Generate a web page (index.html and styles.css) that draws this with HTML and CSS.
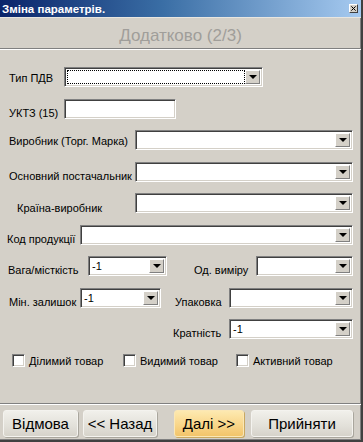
FILE: index.html
```html
<!DOCTYPE html>
<html lang="uk">
<head>
    <meta charset="UTF-8">
    <meta name="viewport" content="width=device-width, initial-scale=1.0">
    <title>Зміна параметрів</title>
    <link rel="stylesheet" href="styles.css">
</head>
<body>
    <div class="window">
        <div class="titlebar">
            <span class="title">Зміна параметрів.</span>
            <span class="close-btn">
                <svg width="7" height="7" viewBox="0 0 7 7"><path d="M0.5 0.5 L6.5 6.5 M6.5 0.5 L0.5 6.5" stroke="#000" stroke-width="1.4"/></svg>
            </span>
        </div>

        <div class="header">Додатково (2/3)</div>

        <div class="panel">
            <div class="form">
                <div class="row r-pdv">
                    <label class="lbl lift">Тип ПДВ</label>
                    <div class="combo">
                        <div class="combo-text focus"></div>
                        <div class="combo-btn"><span class="arrow"></span></div>
                    </div>
                </div>

                <div class="row r-uktz">
                    <label class="lbl">УКТЗ (15)</label>
                    <div class="edit"></div>
                </div>

                <div class="row r-wide">
                    <label class="lbl lift">Виробник (Торг. Марка)</label>
                    <div class="combo">
                        <div class="combo-text"></div>
                        <div class="combo-btn"><span class="arrow"></span></div>
                    </div>
                </div>

                <div class="row r-wide">
                    <label class="lbl">Основний постачальник</label>
                    <div class="combo">
                        <div class="combo-text"></div>
                        <div class="combo-btn"><span class="arrow"></span></div>
                    </div>
                </div>

                <div class="row r-wide r-country">
                    <label class="lbl">Країна-виробник</label>
                    <div class="combo">
                        <div class="combo-text"></div>
                        <div class="combo-btn"><span class="arrow"></span></div>
                    </div>
                </div>

                <div class="row r-code">
                    <label class="lbl">Код продукції</label>
                    <div class="combo">
                        <div class="combo-text"></div>
                        <div class="combo-btn"><span class="arrow"></span></div>
                    </div>
                </div>

                <div class="row r-weight">
                    <label class="lbl">Вага/місткість</label>
                    <div class="combo c-weight">
                        <div class="combo-text">-1</div>
                        <div class="combo-btn"><span class="arrow"></span></div>
                    </div>
                    <label class="lbl l-unit">Од. виміру</label>
                    <div class="combo c-unit">
                        <div class="combo-text"></div>
                        <div class="combo-btn"><span class="arrow"></span></div>
                    </div>
                </div>

                <div class="row r-min">
                    <label class="lbl">Мін. залишок</label>
                    <div class="combo c-min">
                        <div class="combo-text">-1</div>
                        <div class="combo-btn"><span class="arrow"></span></div>
                    </div>
                    <label class="lbl l-pack">Упаковка</label>
                    <div class="combo c-pack">
                        <div class="combo-text"></div>
                        <div class="combo-btn"><span class="arrow"></span></div>
                    </div>
                </div>

                <div class="row r-mult">
                    <label class="lbl">Кратність</label>
                    <div class="combo c-pack">
                        <div class="combo-text">-1</div>
                        <div class="combo-btn"><span class="arrow"></span></div>
                    </div>
                </div>
            </div>

            <div class="checks">
                <label class="check ch-1"><span class="box"></span>Ділимий товар</label>
                <label class="check ch-2"><span class="box"></span>Видимий товар</label>
                <label class="check ch-3"><span class="box"></span>Активний товар</label>
            </div>
        </div>

        <div class="footer">
            <button class="btn b-cancel">Відмова</button>
            <button class="btn b-back">&lt;&lt; Назад</button>
            <button class="btn b-next">Далі &gt;&gt;</button>
            <button class="btn b-ok">Прийняти</button>
        </div>
    </div>
</body>
</html>
```

FILE: styles.css
```css
body {
    margin: 0;
    padding: 0;
    font-family: 'Liberation Sans', Arial, sans-serif;
    background: #d4d0c8;
}

.window {
    width: 363px;
    height: 442px;
    box-sizing: border-box;
    background: #d4d0c8;
    border-right: 2px solid #404040;
    border-bottom: 2px solid #404040;
    box-shadow: inset -1px -1px 0 #808080;
    display: flex;
    flex-direction: column;
}

/* заголовок вікна */
.titlebar {
    height: 17px;
    flex: none;
    background: linear-gradient(to right, #0a246a, #3a6ea5 45%, #a6caf0);
    display: flex;
    align-items: center;
    justify-content: space-between;
    padding: 0 3px 0 2px;
}

.title {
    color: #fff;
    font-weight: bold;
    font-size: 11.5px;
}

.close-btn {
    width: 9px;
    height: 9px;
    background: #d4d0c8;
    border: 1px solid;
    border-color: #fff #404040 #404040 #fff;
    display: flex;
    align-items: center;
    justify-content: center;
    box-sizing: border-box;
}

.close-btn svg {
    width: 5px;
    height: 5px;
}

.header {
    height: 32px;
    flex: none;
    box-sizing: border-box;
    border-top: 1px solid #e8e6e0;
    border-bottom: 1px solid #808080;
    text-align: center;
    font-size: 17px;
    color: #a09e9a;
    padding-top: 5px;
    line-height: 26px;
}

.panel {
    flex: 1;
    border-top: 1px solid #fff;
    display: flex;
    flex-direction: column;
    padding-top: 17px;
}

.form {
    display: flex;
    flex-direction: column;
    gap: 11.5px;
}

.row {
    display: flex;
    align-items: flex-end;
    height: 20px;
}

.lbl {
    flex: none;
    box-sizing: border-box;
    padding-left: 9px;
    font-size: 11px;
    line-height: 11px;
    color: #000;
    white-space: nowrap;
}

.lbl.lift {
    padding-bottom: 3px;
}

.r-pdv .lbl,
.r-uktz .lbl {
    width: 64px;
}

.r-pdv .combo {
    width: 199px;
}

.r-wide .lbl {
    width: 135px;
}

.r-wide .combo {
    width: 218px;
}

.r-country .lbl {
    padding-left: 17px;
    margin-bottom: -1px;
}

.r-code .lbl {
    width: 80px;
    padding-left: 7px;
}

.r-code .combo {
    width: 273px;
}

.r-weight .lbl {
    width: 88px;
    padding-left: 8px;
}

.c-weight {
    width: 79px;
}

.r-weight .l-unit {
    width: 89px;
    padding-left: 27px;
}

.c-unit {
    width: 97px;
}

.r-min .lbl {
    width: 80px;
}

.c-min {
    width: 81px;
}

.r-min .l-pack {
    width: 68px;
    padding-left: 14px;
}

.c-pack {
    width: 124px;
}

.r-mult .lbl {
    width: 229px;
    padding-left: 173px;
}

/* поля вводу */
.edit,
.combo {
    height: 20px;
    box-sizing: border-box;
    background: #fff;
    border: 1px solid;
    border-color: #808080 #fff #fff #808080;
    box-shadow: inset 1px 1px 0 #404040, inset -1px -1px 0 #d4d0c8;
}

.edit {
    width: 112px;
}

.combo {
    display: flex;
    padding: 2px;
}

.combo-text {
    flex: 1;
    font-size: 11px;
    line-height: 14px;
    padding-left: 1px;
    color: #000;
}

.combo-text.focus {
    outline: 1px dotted #000;
    outline-offset: -1px;
}

.combo-btn {
    width: 15px;
    flex: none;
    box-sizing: border-box;
    background: #d4d0c8;
    border: 1px solid;
    border-color: #fff #808080 #808080 #fff;
    display: flex;
    align-items: center;
    justify-content: center;
}

.arrow {
    width: 0;
    height: 0;
    border-left: 4px solid transparent;
    border-right: 4px solid transparent;
    border-top: 4px solid #000;
}

/* прапорці */
.checks {
    display: flex;
    margin-top: 15px;
    padding-left: 12px;
}

.check {
    display: flex;
    align-items: center;
    font-size: 11px;
    color: #000;
    white-space: nowrap;
}

.ch-1 {
    width: 111px;
}

.ch-2 {
    width: 113px;
}

.box {
    width: 13px;
    height: 13px;
    box-sizing: border-box;
    background: #fff;
    border: 1px solid;
    border-color: #808080 #fff #fff #808080;
    box-shadow: inset 1px 1px 0 #404040, inset -1px -1px 0 #d4d0c8;
    margin-right: 4px;
}

/* кнопки */
.footer {
    height: 37px;
    flex: none;
    box-sizing: border-box;
    border-top: 1px solid #808080;
    box-shadow: inset 0 1px 0 #fff;
    display: flex;
    padding: 6px 0 0 3px;
}

.btn {
    height: 27px;
    box-sizing: border-box;
    font-family: 'Liberation Sans', Arial, sans-serif;
    font-size: 15px;
    color: #000;
    border: 1px solid #f4f3ef;
    border-radius: 3px;
    background: linear-gradient(#f1f0eb, #e2e0d9 60%, #d6d3ca);
    box-shadow: 1px 1px 0 #a9a69d;
    padding: 0;
    cursor: pointer;
}

.b-cancel {
    width: 75px;
}

.b-back {
    width: 74px;
    margin-left: 5px;
}

.b-next {
    width: 70px;
    margin-left: 17px;
    border-color: #fbe7b5;
    background: linear-gradient(#fde9b0, #f9d68a 55%, #f2c46a);
    box-shadow: 1px 1px 0 #c9a860;
}

.b-ok {
    width: 102px;
    margin-left: 7px;
}
```
